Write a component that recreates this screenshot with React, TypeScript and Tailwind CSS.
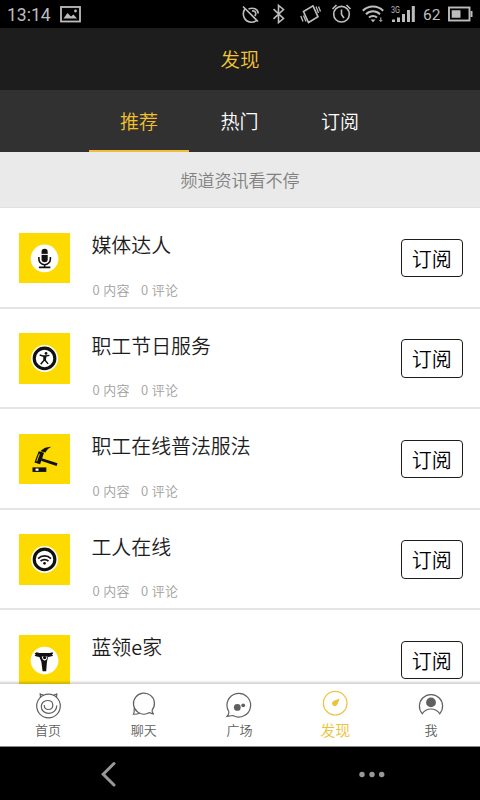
import { useState, type ReactNode } from "react";

interface Channel {
  id: number;
  title: string;
  stats?: { contents: number; comments: number };
  icon: ReactNode;
}

const MicIcon = () => (
  <svg viewBox="0 0 51 51" className="h-full w-full">
    <circle cx="25.7" cy="25.7" r="14" fill="#fff" />
    <rect x="22.700" y="16" width="6.200" height="13.500" rx="3.100" fill="#111" />
    <path d="M22 21.600h7.400" stroke="#fff" strokeWidth="1" />
    <path
      d="M20 24.200v2a5.700 5.700 0 0 0 11.600 0v-2M25.800 32v2.600M20 34.700h11.600"
      fill="none"
      stroke="#111"
      strokeWidth="1.6"
    />
  </svg>
);

const PersonIcon = () => (
  <svg viewBox="0 0 51 51" className="h-full w-full">
    <circle cx="25.7" cy="25.7" r="13.6" fill="#fff" />
    <circle cx="25.7" cy="25.7" r="10.4" fill="#fff" stroke="#111" strokeWidth="3.2" />
    <circle cx="27.2" cy="20.6" r="1.400" fill="#111" />
    <path
      d="M20.800 22.200l4.200 1.200 5.600-.8M25.800 23.800l-.6 3.700-3.400 4M25.800 27l3.500 4.200"
      fill="none"
      stroke="#111"
      strokeWidth="1.500"
      strokeLinejoin="round"
    />
    <path d="M24.400 22.900h3.400l-.8 4.600h-2.300z" fill="#111" />
  </svg>
);

const HammerIcon = () => (
  <svg viewBox="0 0 51 51" className="h-full w-full" fill="#111">
    <path d="M13.500 33.700h14v4.600h-14z" />
    <path d="M16.600 34.900h3v2.200h-3z" fill="#fff" />
    <path d="M21.500 17.400c2.700-2.800 5.600-4.300 11-4.600-3 1.500-4.600 3.200-5.800 6z" />
    <path d="M19.800 17.500l5.400 1.400-4 11.700-5.700-1.900z" />
    <path d="M20.500 20l-2.700 7.600" stroke="#fedb00" strokeWidth=".9" />
    <path d="M23 24.500l15.800 5-.9 2.900L22 27z" />
  </svg>
);

const WifiBadgeIcon = () => (
  <svg viewBox="0 0 51 51" className="h-full w-full">
    <circle cx="25.7" cy="25.7" r="13.6" fill="#fff" />
    <circle cx="25.7" cy="25.7" r="10.4" fill="#fff" stroke="#111" strokeWidth="3.2" />
    <path
      d="M19.200 24.800a9.300 9.300 0 0 1 13 0M21.700 27.400a5.800 5.800 0 0 1 8 0"
      fill="none"
      stroke="#111"
      strokeWidth="1.7"
    />
    <circle cx="25.700" cy="29.600" r="1.400" fill="#111" />
  </svg>
);

const WorkerIcon = () => (
  <svg viewBox="0 0 51 51" className="h-full w-full">
    <circle cx="25.7" cy="25.8" r="14" fill="#fff" />
    <path
      d="M17.800 17.400l2.700.8h10.500l2.700-.8.700 1.300-1.200 1 1.200 1.200-2.400.9-2.700.4-1.200 4.800-.7 9.700h-3.700l-1.200-9.700-2-4.800-2.700-.4-2.200-.9 1.200-1.200-1.200-1z"
      fill="#111"
    />
    <path d="M22.800 21.700h5.900l-.8 2.900-2 1.300-2.200-1.300z" fill="#fff" />
    <circle cx="25.800" cy="22.800" r="1.700" fill="#111" />
  </svg>
);

const channels: Channel[] = [
  { id: 1, title: "媒体达人", stats: { contents: 0, comments: 0 }, icon: <MicIcon /> },
  { id: 2, title: "职工节日服务", stats: { contents: 0, comments: 0 }, icon: <PersonIcon /> },
  { id: 3, title: "职工在线普法服法", stats: { contents: 0, comments: 0 }, icon: <HammerIcon /> },
  { id: 4, title: "工人在线", stats: { contents: 0, comments: 0 }, icon: <WifiBadgeIcon /> },
  { id: 5, title: "蓝领e家", icon: <WorkerIcon /> },
];

const tabs = ["推荐", "热门", "订阅"];

const navItems = [
  {
    label: "首页",
    icon: (
      <>
        <circle cx="14.500" cy="15" r="11.800" />
        <path d="M6.500 6.500L6.200 3l3.800 1.500M22.500 6.500l.3-3.500-3.800 1.500" />
        <path d="M10.200 14c-.2 2.800 1.700 4.500 4.200 4.500 2.600 0 4.400-1.800 4.400-4.200 0-3-2.300-4.800-5.200-4.800-3.700 0-6.300 2.600-6.300 5.900 0 4.200 3.400 7 7.500 7 4.600 0 8-3.300 8-7.800" />
      </>
    ),
  },
  {
    label: "聊天",
    icon: (
      <>
        <path d="M22 19.300A10.500 10.500 0 1 0 7.600 20.900C11 23.700 15.800 23.900 19.400 21.600L23.700 23.100C22.400 21.900 22.100 20.700 22 19.300" />
        <path d="M4.200 17.200c.2 2.300.2 4.200-.8 6 2 .2 4.300-.2 6.200-1" />
      </>
    ),
  },
  {
    label: "广场",
    icon: (
      <>
        <path d="M3.800 20.500A11.800 11.800 0 1 1 8 24.500L2 25.300C3.400 23.900 4 22.300 3.800 20.500" />
        <g fill="currentColor" stroke="none">
          <circle cx="12.300" cy="16.400" r="3.400" />
          <circle cx="18.200" cy="14.300" r="1.900" />
        </g>
      </>
    ),
  },
  {
    label: "发现",
    icon: (
      <>
        <circle cx="14.200" cy="14.200" r="11.800" />
        <path
          d="M18.800 9.600L16.300 15.600a2.800 2.800 0 1 1-3.900-3.700z"
          fill="currentColor"
          stroke="none"
        />
      </>
    ),
  },
  {
    label: "我",
    icon: (
      <>
        <path d="M5.300 22.800A11.600 11.600 0 1 1 22.700 22.800C20.800 19.800 17.700 18 14 18s-6.800 1.800-8.700 4.800z" />
        <circle cx="14" cy="11.400" r="4.900" fill="currentColor" stroke="none" />
      </>
    ),
  },
];

function StatusBar() {
  return (
    <div className="flex h-7 shrink-0 items-center bg-black pl-[7px] font-['Roboto',sans-serif] font-normal text-[#bdbdbd]">
      <span className="w-[53px] pt-px text-[17.5px] leading-7">13:14</span>
      <svg width="21" height="17" viewBox="0 0 21 17" fill="none" stroke="currentColor">
        <rect x="1" y="1" width="19" height="14.500" strokeWidth="1.800" />
        <path d="M3.500 12.500l4-5.500 3.500 3.500 2.500-2 3.500 4z" fill="currentColor" stroke="none" />
        <circle cx="15.500" cy="5" r="1.400" fill="currentColor" stroke="none" />
      </svg>
      <svg
        width="399"
        height="28"
        viewBox="81 0 399 28"
        fill="none"
        stroke="currentColor"
        strokeWidth="1.600"
      >
        {/* eye off */}
        <path d="M243 6.500l15 15M245 8.500c-3.500 5.500-1.200 13 6 13.700 2.200.2 4-.4 5.500-1.500M248.500 9c4.500-1.800 9.500-.3 9.700 4.500M252 11c3.500-.6 4.800 2.500 2.800 5" />
        {/* bluetooth */}
        <path d="M273.500 9.200l10 9.300-5 4V5.500l5 4-10 9.300" />
        {/* vibrate */}
        <path d="M303.500 11.500l9.500-5.700 5 11-9.500 5.700z" />
        <path d="M303.500 15.500l2.500 6M300.800 16l2.200 5.500M318.500 13l-2.500-6.500M320.500 11.500l-2-5" strokeWidth="1.300" />
        {/* alarm */}
        <circle cx="341.500" cy="14.200" r="7.800" />
        <path d="M341.500 9.500v5l2.500 3.500M332.500 9l4-4M350.500 9l-4-4" />
        {/* wifi */}
        <path
          d="M362.800 10.800a14.300 14.300 0 0 1 20.400 0M366 14.300a9.800 9.800 0 0 1 14 0M369 17.500a5.800 5.800 0 0 1 8 0"
          strokeWidth="2"
        />
        <path d="M370.500 19.500h5l-2.500 2.800z" fill="currentColor" stroke="none" />
        <path d="M380.800 17.500v4M379.300 20l1.500 1.500 1.500-1.500" strokeWidth="1" />
        <text x="391" y="12.500" fontSize="8.500" textLength="9" lengthAdjust="spacingAndGlyphs" fill="currentColor" stroke="none">
          3G
        </text>
        {/* signal */}
        <path
          d="M393.500 22v-2.500M398.500 22v-4.500M403.500 22v-8M408.500 22v-12M413.300 22v-16"
          strokeWidth="3"
        />
        <text x="423" y="20" fontSize="15.500" fill="currentColor" stroke="none">
          62
        </text>
        {/* battery */}
        <rect x="449" y="7.500" width="20.500" height="13" strokeWidth="1.900" />
        <path d="M451.700 10.200h8.800v7.600h-8.800zM470.500 11h2v6h-2z" fill="currentColor" stroke="none" />
      </svg>
    </div>
  );
}

function ChannelRow({ channel }: { channel: Channel }) {
  return (
    <li className="flex h-[100.5px] border-b-2 border-[#e5e5e5] pr-[17px] pl-[19.3px]">
      <div className="mt-[24.5px] h-[50.5px] w-[50.7px] shrink-0 bg-[#fedb00]">{channel.icon}</div>
      <div className="ml-[21.5px] flex-1">
        <h2 className="mt-[23px] text-[19.9px] leading-7 text-[#1c1c1c]">{channel.title}</h2>
        {channel.stats && (
          <p className="mt-[20.5px] flex gap-[11px] pl-px text-[13px] leading-5 tracking-[0.35px] text-[#a0a0a0]">
            <span>{channel.stats.contents} 内容</span>
            <span>{channel.stats.comments} 评论</span>
          </p>
        )}
      </div>
      <button className="mt-[30.5px] h-[38.5px] w-[62.5px] rounded-[4px] border-[1.5px] border-[#1c1c1c] pt-px text-[20px] leading-[36px] text-black">
        订阅
      </button>
    </li>
  );
}

export default function App() {
  const [activeTab, setActiveTab] = useState("推荐");
  const [activeNav, setActiveNav] = useState("发现");

  return (
    <div className="flex h-[800px] w-[480px] flex-col overflow-hidden bg-white font-['Noto_Sans_CJK_SC',sans-serif] [font-weight:350]">
      <StatusBar />

      <header className="h-[62px] shrink-0 bg-[#1d1d1d] text-center text-[19.5px] leading-[61px] text-[#f3c63a]">
        发现
      </header>

      <div className="flex h-[62px] shrink-0 justify-center bg-[#313131] pr-px">
        {tabs.map((tab) => (
          <button
            key={tab}
            onClick={() => setActiveTab(tab)}
            className={`w-[100.5px] border-b-[2.5px] pt-[2px] text-[19px] leading-[58px] ${
              activeTab === tab
                ? "border-[#efbd3a] text-[#f3c02f]"
                : "border-transparent text-white"
            }`}
          >
            {tab}
          </button>
        ))}
      </div>

      <p className="h-14 shrink-0 border-b border-[#e0e0e0] bg-[#eaeaea] text-center text-[17px] leading-[56px] text-[#808080]">
        频道资讯看不停
      </p>

      <ul className="h-[476px] shrink-0 overflow-hidden">
        {channels.map((channel) => (
          <ChannelRow key={channel.id} channel={channel} />
        ))}
      </ul>

      <nav className="flex h-[62.5px] shrink-0 border-b border-[#888] bg-white pr-[1px] shadow-[0_-1px_2px_1px_rgba(0,0,0,0.18)]">
        {navItems.map((item) => {
          const active = activeNav === item.label;
          return (
            <button
              key={item.label}
              onClick={() => setActiveNav(item.label)}
              className={`flex flex-1 flex-col items-center ${
                active ? "pt-[5px] text-[#eec13a]" : "pt-[7px] text-[#606060]"
              }`}
            >
              <svg
                width="28"
                height="28"
                viewBox="0 0 28 28"
                fill="none"
                stroke="currentColor"
                strokeWidth="1.2"
              >
                {item.icon}
              </svg>
              <span className={active ? "text-[15px] leading-[26px]" : "text-[13px] leading-[22px]"}>
                {item.label}
              </span>
            </button>
          );
        })}
      </nav>

      <div className="flex flex-1 items-center bg-black text-[#999]">
        <svg width="480" height="54" viewBox="0 0 480 54" fill="none" stroke="currentColor">
          <path d="M114 16.500l-10.800 10.700L114 38" strokeWidth="3" strokeLinecap="round" />
          <g fill="currentColor" stroke="none">
            <circle cx="362" cy="27.500" r="2.700" />
            <circle cx="372" cy="27.500" r="2.700" />
            <circle cx="381.700" cy="27.500" r="2.700" />
          </g>
        </svg>
      </div>
    </div>
  );
}
